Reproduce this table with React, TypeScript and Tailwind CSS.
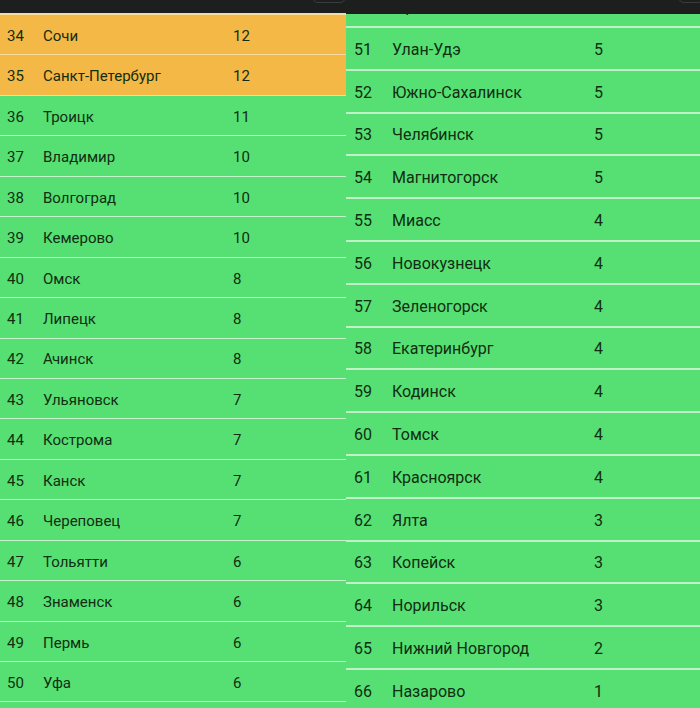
const left: [number, string, number][] = [
  [34, "Сочи", 12],
  [35, "Санкт-Петербург", 12],
  [36, "Троицк", 11],
  [37, "Владимир", 10],
  [38, "Волгоград", 10],
  [39, "Кемерово", 10],
  [40, "Омск", 8],
  [41, "Липецк", 8],
  [42, "Ачинск", 8],
  [43, "Ульяновск", 7],
  [44, "Кострома", 7],
  [45, "Канск", 7],
  [46, "Череповец", 7],
  [47, "Тольятти", 6],
  [48, "Знаменск", 6],
  [49, "Пермь", 6],
  [50, "Уфа", 6],
];

const right: [number, string, number][] = [
  [50, "Уфа", 6],
  [51, "Улан-Удэ", 5],
  [52, "Южно-Сахалинск", 5],
  [53, "Челябинск", 5],
  [54, "Магнитогорск", 5],
  [55, "Миасс", 4],
  [56, "Новокузнецк", 4],
  [57, "Зеленогорск", 4],
  [58, "Екатеринбург", 4],
  [59, "Кодинск", 4],
  [60, "Томск", 4],
  [61, "Красноярск", 4],
  [62, "Ялта", 3],
  [63, "Копейск", 3],
  [64, "Норильск", 3],
  [65, "Нижний Новгород", 2],
  [66, "Назарово", 1],
];

export default function App() {
  return (
    <div
      className="flex h-[708px] w-[700px] overflow-hidden bg-[#56e073] text-[#112d12]"
      style={{ fontFamily: "Roboto, 'Noto Sans', sans-serif" }}
    >
      {/* left screenshot */}
      <div className="flex w-[346px] flex-col overflow-hidden">
        <div className="relative h-[13px] shrink-0 bg-[#1d1f1e]">
          <div className="absolute -top-3 right-0 h-[15px] w-[34px] rounded-md border border-[#3a3d3c]"></div>
        </div>
        <div className="h-[2px] shrink-0 bg-[#f6dca0]"></div>
        {left.map(([n, city, score]) => (
          <div
            key={n}
            className={`flex h-[40.44px] shrink-0 items-center border-b border-[#c3f3cb] pt-[3px] text-[15px] ${
              n <= 35 ? "border-[#f8dba0] bg-[#f3b845]" : ""
            }`}
          >
            <span className="w-[43px] pl-[7px]">{n}</span>
            <span className="w-[190px]">{city}</span>
            <span>{score}</span>
          </div>
        ))}
      </div>

      {/* right screenshot */}
      <div className="flex flex-1 flex-col overflow-hidden">
        <div className="relative h-[14px] shrink-0 bg-[#1d1f1e]">
          <div className="absolute -top-3 right-[-4px] h-[15px] w-[26px] rounded-md border border-[#3a3d3c]"></div>
        </div>
        <div className="flex flex-col overflow-hidden">
          {right.map(([n, city, score], i) => (
            <div
              key={n + "-" + i}
              className={`flex h-[42.8px] shrink-0 items-center border-b-2 border-[#bff2c8] pt-[3px] text-[16px] ${
                i === 0 ? "-mt-[28.8px]" : ""
              }`}
            >
              <span className="w-[46px] pl-[8px]">{n}</span>
              <span className="w-[202px]">{city}</span>
              <span>{score}</span>
            </div>
          ))}
        </div>
      </div>
    </div>
  );
}
